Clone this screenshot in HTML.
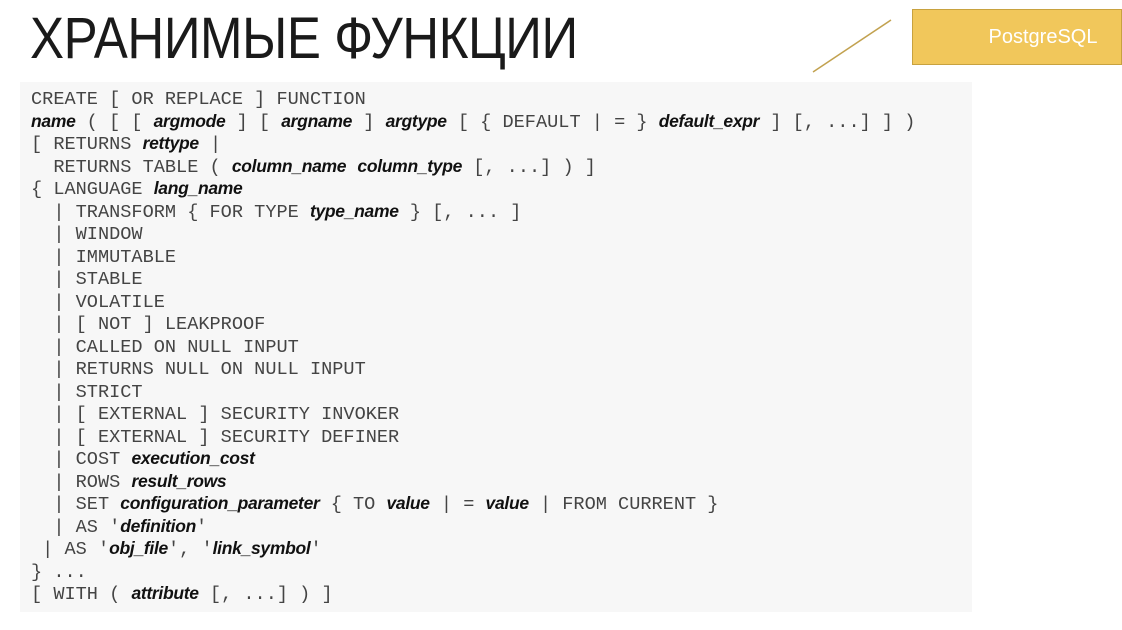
<!DOCTYPE html>
<html><head><meta charset="utf-8"><style>
body{margin:0;width:1122px;height:630px;background:#fff;position:relative;overflow:hidden;font-family:"Liberation Sans",sans-serif}
.t{position:absolute;left:30px;top:5px;font-size:58px;color:#1a1a1a;transform:scaleX(0.88);transform-origin:left top;white-space:nowrap;letter-spacing:-0.5px;font-weight:normal}
.box{position:absolute;left:912px;top:9px;width:210px;height:56px;background:#f1c75b;border:1px solid #c8a23f;box-sizing:border-box;color:#fff;font-size:20px;line-height:54px;text-align:center;padding-left:52px}
.code{position:absolute;left:20px;top:82px;width:952px;height:530px;background:#f7f7f7}
pre{margin:0;position:absolute;left:31px;top:89px;font-family:"Liberation Mono",monospace;font-size:18.6px;line-height:22.5px;color:#444}
i{font-family:"Liberation Sans",sans-serif;font-weight:bold;font-size:17.5px;color:#111;letter-spacing:-0.3px;line-height:0}
</style></head><body>
<div class="t">ХРАНИМЫЕ ФУНКЦИИ</div>
<svg style="position:absolute;left:0;top:0" width="1122" height="630"><line x1="813" y1="72" x2="891" y2="20" stroke="#c2a250" stroke-width="1.5"/></svg>
<div class="box">PostgreSQL</div>
<div class="code"></div>
<pre>CREATE [ OR REPLACE ] FUNCTION
<i>name</i> ( [ [ <i>argmode</i> ] [ <i>argname</i> ] <i>argtype</i> [ { DEFAULT | = } <i>default_expr</i> ] [, ...] ] )
[ RETURNS <i>rettype</i> |
  RETURNS TABLE ( <i>column_name</i> <i>column_type</i> [, ...] ) ]
{ LANGUAGE <i>lang_name</i>
  | TRANSFORM { FOR TYPE <i>type_name</i> } [, ... ]
  | WINDOW
  | IMMUTABLE
  | STABLE
  | VOLATILE
  | [ NOT ] LEAKPROOF
  | CALLED ON NULL INPUT
  | RETURNS NULL ON NULL INPUT
  | STRICT
  | [ EXTERNAL ] SECURITY INVOKER
  | [ EXTERNAL ] SECURITY DEFINER
  | COST <i>execution_cost</i>
  | ROWS <i>result_rows</i>
  | SET <i>configuration_parameter</i> { TO <i>value</i> | = <i>value</i> | FROM CURRENT }
  | AS '<i>definition</i>'
 | AS '<i>obj_file</i>', '<i>link_symbol</i>'
} ...
[ WITH ( <i>attribute</i> [, ...] ) ]</pre>
</body></html>
